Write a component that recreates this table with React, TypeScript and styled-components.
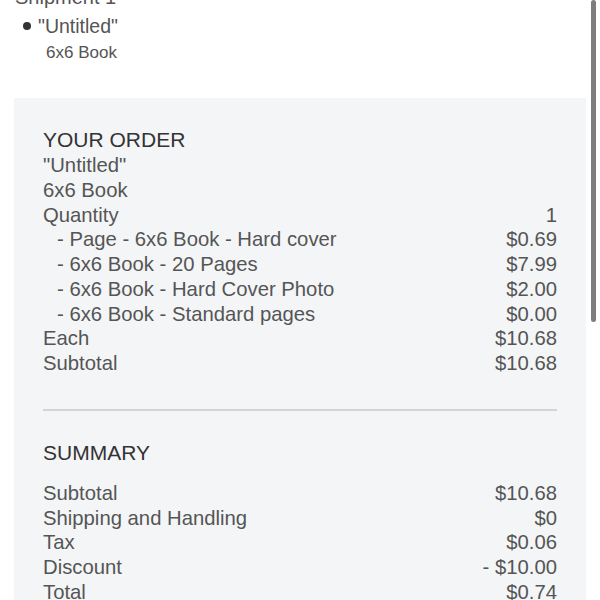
import React from "react";
import styled, { createGlobalStyle } from "styled-components";

const Global = createGlobalStyle`
  html, body { margin: 0; padding: 0; background: #ffffff; }
  body { font-family: "Liberation Sans", Arial, sans-serif; color: #555555; overflow: hidden; }
`;

const Page = styled.div`
  position: relative;
  height: 600px;
  overflow: hidden;
  padding: 0 14px;
`;

const Shipment = styled.div`
  margin-top: -15px;
  padding-left: 1px;
`;

const ShipTitle = styled.div`
  font-size: 20px;
  line-height: 24px;
  color: #555555;
`;

const BulletList = styled.ul`
  margin: 5px 0 0;
  padding: 0 0 0 23px;
  list-style: none;
`;

const Bullet = styled.li`
  position: relative;
  font-size: 19.5px;
  line-height: 24px;
  color: #555555;
  &::before {
    content: "";
    position: absolute;
    left: -15px;
    top: 8px;
    width: 8px;
    height: 8px;
    border-radius: 50%;
    background: #333333;
  }
`;

const SubLine = styled.div`
  font-size: 17px;
  line-height: 22px;
  padding-left: 8px;
  margin-top: 4px;
  color: #555555;
`;

const Panel = styled.section`
  margin-top: 34px;
  background: #f4f5f7;
  padding: 28px 29px 40px;
`;

const Heading = styled.h2`
  margin: 0;
  font-size: 21px;
  line-height: 27px;
  font-weight: 400;
  color: #333333;
`;

const Line = styled.div`
  font-size: 20.3px;
  line-height: 24.75px;
`;

const Row = styled.div<{ $indent?: boolean }>`
  display: flex;
  justify-content: space-between;
  font-size: 20.3px;
  line-height: 24.75px;
  padding-left: ${(p) => (p.$indent ? "14px" : "0")};
`;

const Divider = styled.hr`
  border: 0;
  border-top: 2px solid #d3d4d6;
  margin: 33px 0 28px;
`;

const SummaryHeading = styled(Heading)`
  margin-bottom: 15px;
`;

const Scrollbar = styled.div`
  position: absolute;
  top: 0;
  right: 4px;
  width: 5px;
  height: 322px;
  border-radius: 3px;
  background: #7d7d7d;
`;

const items: [string, string][] = [
  ["- Page - 6x6 Book - Hard cover", "$0.69"],
  ["- 6x6 Book - 20 Pages", "$7.99"],
  ["- 6x6 Book - Hard Cover Photo", "$2.00"],
  ["- 6x6 Book - Standard pages", "$0.00"],
];

const summary: [string, string][] = [
  ["Subtotal", "$10.68"],
  ["Shipping and Handling", "$0"],
  ["Tax", "$0.06"],
  ["Discount", "- $10.00"],
  ["Total", "$0.74"],
];

export default function App() {
  return (
    <>
      <Global />
      <Page>
        <Shipment>
          <ShipTitle>Shipment 1</ShipTitle>
          <BulletList>
            <Bullet>
              "Untitled"
              <SubLine>6x6 Book</SubLine>
            </Bullet>
          </BulletList>
        </Shipment>
        <Panel>
          <Heading>YOUR ORDER</Heading>
          <Line>"Untitled"</Line>
          <Line>6x6 Book</Line>
          <Row>
            <span>Quantity</span>
            <span>1</span>
          </Row>
          {items.map(([l, v]) => (
            <Row $indent key={l}>
              <span>{l}</span>
              <span>{v}</span>
            </Row>
          ))}
          <Row>
            <span>Each</span>
            <span>$10.68</span>
          </Row>
          <Row>
            <span>Subtotal</span>
            <span>$10.68</span>
          </Row>
          <Divider />
          <SummaryHeading>SUMMARY</SummaryHeading>
          {summary.map(([l, v]) => (
            <Row key={l}>
              <span>{l}</span>
              <span>{v}</span>
            </Row>
          ))}
        </Panel>
        <Scrollbar />
      </Page>
    </>
  );
}
